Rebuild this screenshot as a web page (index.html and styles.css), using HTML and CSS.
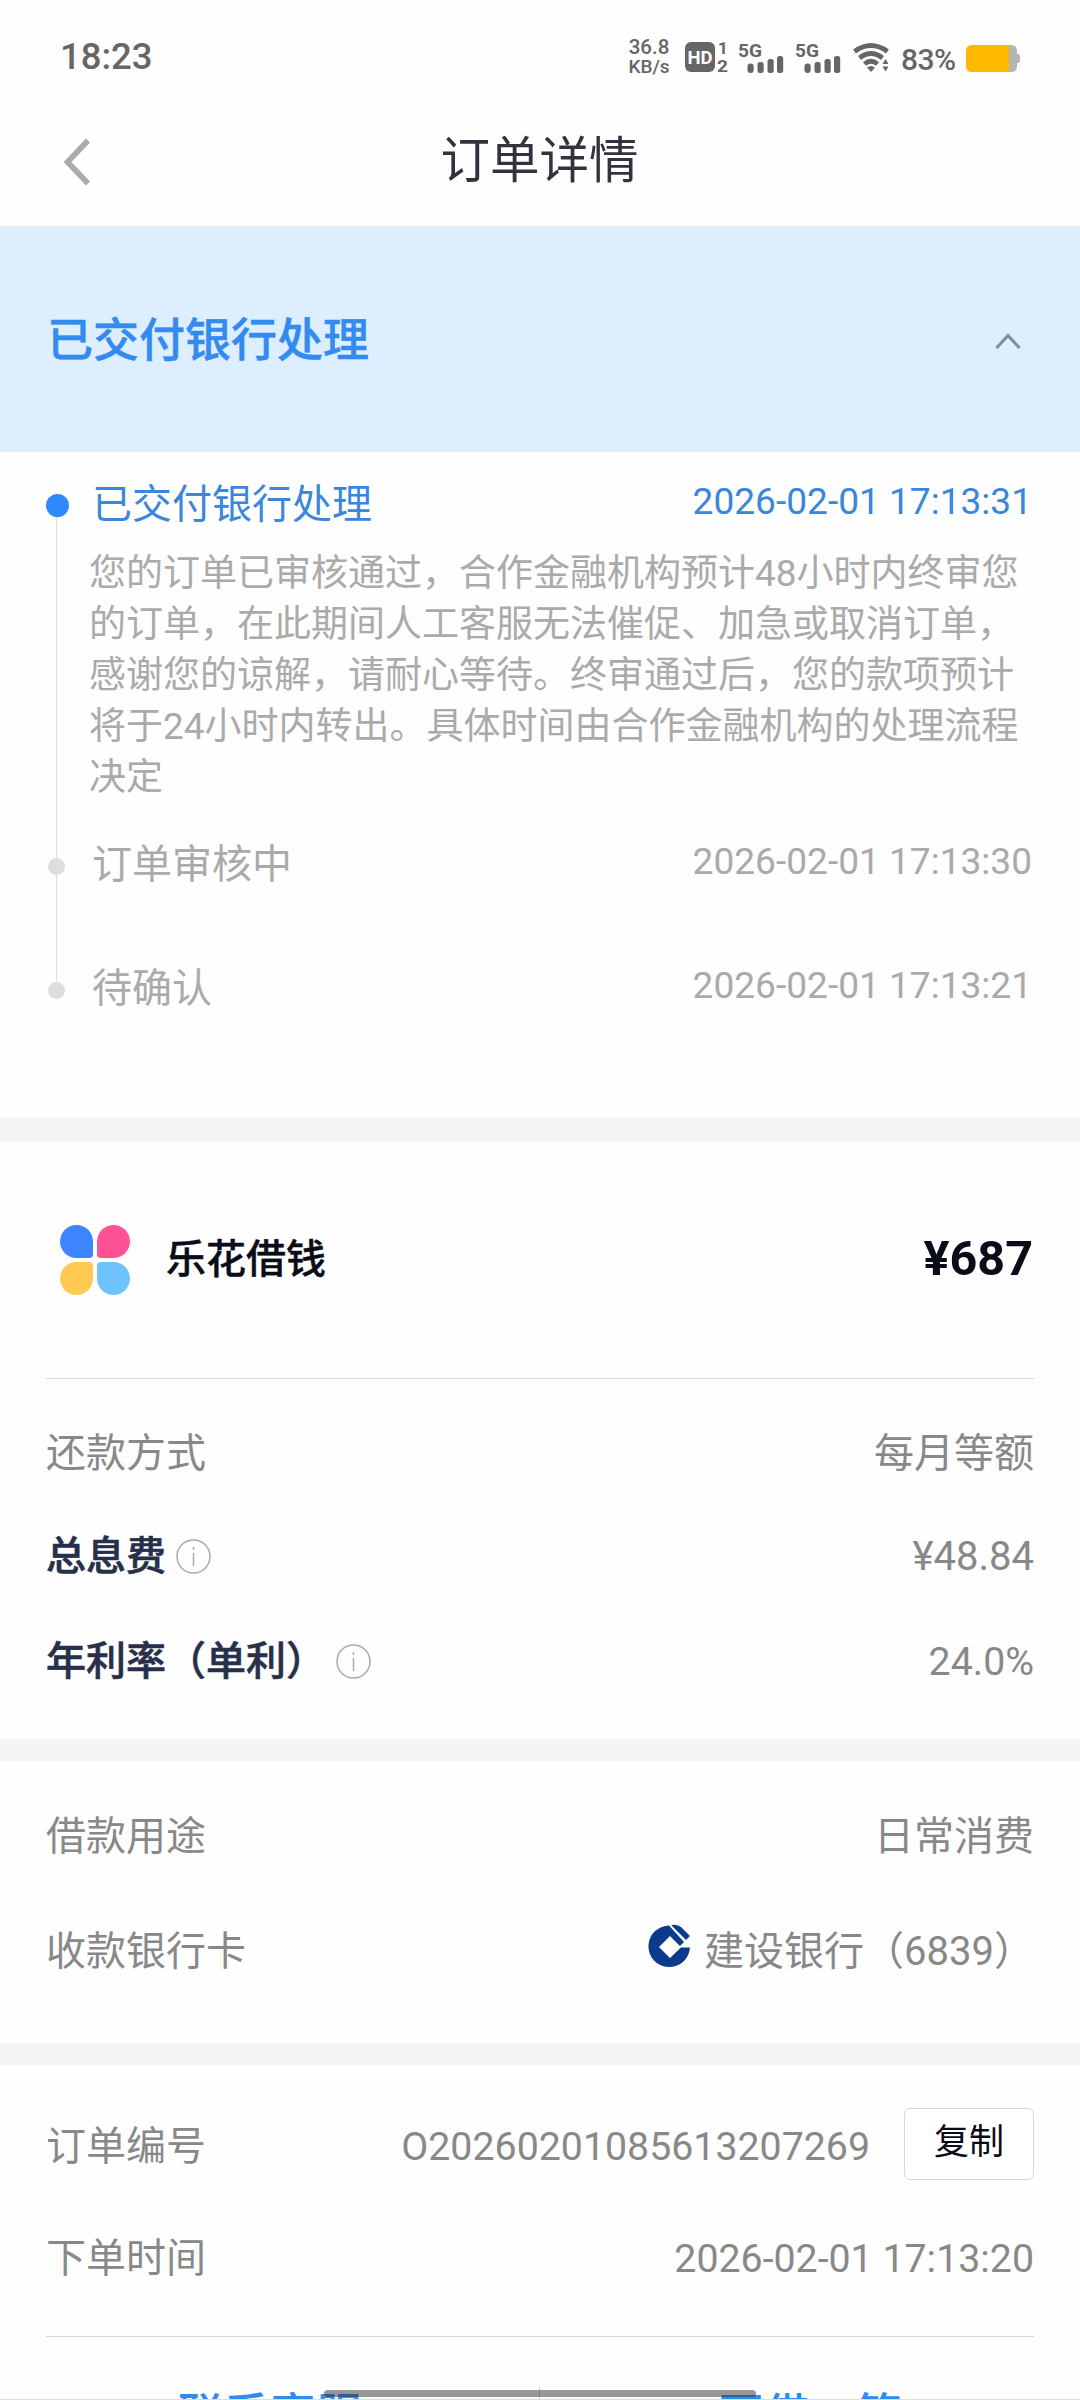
FILE: index.html
```html
<!DOCTYPE html>
<html lang="zh-CN">
<head>
<meta charset="utf-8">
<title>订单详情</title>
<link rel="stylesheet" href="styles.css">
</head>
<body>
<div class="screen">
  <div class="status">
    <span class="clock">18:23</span>
    <div class="status-icons">
      <div class="speed"><span>36.8</span><span>KB/s</span></div>
      <svg class="hd" width="44" height="32" viewBox="0 0 44 32">
        <rect x="0" y="0" width="30" height="30" rx="6" fill="#666"/>
        <text x="15" y="21.500" class="hd-text" text-anchor="middle">HD</text>
        <text x="38" y="11.500" class="sim-text" text-anchor="middle">1</text>
        <text x="32" y="29.500" class="sim-text" textLength="11" lengthAdjust="spacingAndGlyphs">2</text>
      </svg>
      <svg class="sig" width="46" height="32" viewBox="0 0 46 32">
        <text x="0" y="14.500" class="net-text" textLength="24" lengthAdjust="spacingAndGlyphs">5G</text>
        <g fill="#666"><rect x="9.500" y="21.500" width="6.200" height="9.500" rx="3"/><rect x="19.500" y="20" width="6.200" height="11" rx="2.500"/><rect x="29.500" y="17" width="6.200" height="14" rx="2.500"/><rect x="39" y="14" width="6.200" height="17" rx="2.500"/></g>
      </svg>
      <svg class="sig2" width="46" height="32" viewBox="0 0 46 32">
        <text x="0" y="14.500" class="net-text" textLength="24" lengthAdjust="spacingAndGlyphs">5G</text>
        <g fill="#666"><rect x="9.500" y="21.500" width="6.200" height="9.500" rx="3"/><rect x="19.500" y="20" width="6.200" height="11" rx="2.500"/><rect x="29.500" y="17" width="6.200" height="14" rx="2.500"/><rect x="39" y="14" width="6.200" height="17" rx="2.500"/></g>
      </svg>
      <svg class="wifi" width="37" height="30" viewBox="0 0 37 30">
        <g fill="none" stroke="#666" stroke-width="4.800"><path d="M1.500 8.500Q18 -3.500 34.500 8.500"/><path d="M6.500 15Q18 6 29.500 15"/><path d="M11.500 21Q18 15.500 24.500 21"/></g>
        <path d="M14 24.500Q18 21.500 22 24.500L18 29Z" fill="#666"/>
        <path d="M29.500 21L32.500 16L35.500 21ZM29.500 23.500H35.500L32.500 28.500Z" fill="#666"/>
      </svg>
      <span class="percent">83%</span>
      <svg class="battery" width="55" height="28" viewBox="0 0 55 28">
        <path d="M40 0H45Q51 0 51 6V9H52Q54 9 54 11V16Q54 18 52 18H51V21Q51 27 45 27H40Z" fill="#b5b5b5"/>
        <path d="M6 0H43V27H6Q0 27 0 21V6Q0 0 6 0Z" fill="#fdb800"/>
      </svg>
    </div>
  </div>
  <header class="navbar">
    <svg class="back" width="28" height="48" viewBox="0 0 28 48"><path d="M25 2.500L4.500 24L25 45.500" fill="none" stroke="#aaa" stroke-width="5.600"/></svg>
    <h1>订单详情</h1>
  </header>
  <section class="banner">
    <h2>已交付银行处理</h2>
    <svg width="26" height="17" viewBox="0 0 26 17"><path d="M1.500 15L13 2.500L24.500 15" fill="none" stroke="#7e8c9c" stroke-width="3"/></svg>
  </section>
  <section class="timeline">
    <div class="step current">
      <div class="rail"><i class="dot"></i></div>
      <div class="step-body">
        <div class="step-head"><span>已交付银行处理</span><time>2026-02-01 17:13:31</time></div>
        <p>您的订单已审核通过，合作金融机构预计48小时内终审您<br>的订单，在此期间人工客服无法催促、加急或取消订单，<br>感谢您的谅解，请耐心等待。终审通过后，您的款项预计<br>将于24小时内转出。具体时间由合作金融机构的处理流程<br>决定</p>
      </div>
    </div>
    <div class="step">
      <div class="rail"><i class="dot"></i></div>
      <div class="step-body"><div class="step-head"><span>订单审核中</span><time>2026-02-01 17:13:30</time></div></div>
    </div>
    <div class="step last">
      <div class="rail"><i class="dot"></i></div>
      <div class="step-body"><div class="step-head"><span>待确认</span><time>2026-02-01 17:13:21</time></div></div>
    </div>
  </section>
  <section class="loan">
    <div class="product">
      <div class="petals"><i class="blue"></i><i class="pink"></i><i class="yellow"></i><i class="sky"></i></div>
      <span class="product-name">乐花借钱</span>
      <span class="amount">¥687</span>
    </div>
    <div class="row r1"><span>还款方式</span><span>每月等额</span></div>
    <div class="row r2"><span class="strong">总息费</span>
      <svg class="info" width="35" height="35" viewBox="0 0 35 35"><circle cx="17.500" cy="17.500" r="16.500"/><path d="M17.500 14V27M17.500 8V11"/></svg>
      <span class="value money">¥48.84</span></div>
    <div class="row r3"><span class="strong">年利率（单利）</span>
      <svg class="info" width="35" height="35" viewBox="0 0 35 35"><circle cx="17.500" cy="17.500" r="16.500"/><path d="M17.500 14V27M17.500 8V11"/></svg>
      <span class="value">24.0%</span></div>
  </section>
  <section class="usage">
    <div class="row u1"><span>借款用途</span><span>日常消费</span></div>
    <div class="row u2"><span>收款银行卡</span>
      <span class="bank">
        <svg width="42" height="44" viewBox="0 0 42 44">
          <path d="M20 1.500A20.800 20.800 0 1 0 41 23.500H32L21 34L10 23L21 12L31 22L35 18Z" fill="#0b3b8c"/>
          <path d="M23 1Q29 0 34 5L41 12L37 16L22.500 1.500Z" fill="#0b3b8c"/>
        </svg>建设银行（6839）</span></div>
  </section>
  <section class="order">
    <div class="row o1"><span>订单编号</span><span class="value">O20260201085613207269</span><button class="copy">复制</button></div>
    <div class="row o2"><span>下单时间</span><span class="value">2026-02-01 17:13:20</span></div>
    <div class="actions"><a>联系客服</a><a>再借一笔</a></div>
  </section>
  <div class="home-bar"></div>
</div>
</body>
</html>
```
FILE: styles.css
```css
* { box-sizing: border-box; }
body { margin: 0; background: #fefefe; font-family: Roboto, "Noto Sans CJK SC", sans-serif; color: #888; }
h1, h2, p { margin: 0; }
svg { display: block; flex: none; overflow: visible; }
.screen { position: relative; width: 1080px; height: 2400px; overflow: hidden; display: flex; flex-direction: column; border-bottom: 1px solid #ddd; }

.status { height: 96px; flex: none; display: flex; justify-content: space-between; padding: 36px 59px 0 60px; color: #666; }
.clock { font-size: 36.500px; font-weight: 500; line-height: 42px; }
.status-icons { display: flex; align-items: flex-start; }
.speed { width: 44px; display: flex; flex-direction: column; align-items: center; font-size: 19px; font-weight: 500; line-height: 19px; margin-right: 14px; padding-top: 2px; }
.speed span:first-child { font-size: 20.500px; }
.hd { margin: 6px 9px 0 0; }
.sig { margin: 6px 11px 0 0; }
.sig2 { margin: 6px 12px 0 0; }
.wifi { margin: 7px 11px 0 0; }
.hd-text { font: 700 18.500px Roboto, sans-serif; fill: #fff; }
.sim-text { font: 700 17px Roboto, sans-serif; fill: #666; }
.net-text { font: 700 19px Roboto, sans-serif; fill: #666; }
.percent { width: 57px; font-size: 30px; font-weight: 500; line-height: 34px; margin: 7px 8px 0 0; white-space: nowrap; letter-spacing: -0.500px; }
.battery { margin-top: 9px; }

.navbar { height: 131px; flex: none; display: grid; grid-template-columns: 64px 1fr 64px; align-items: center; border-bottom: 1px solid #e4ecf8; }
.back { margin: 1px 0 0 63px; }
.navbar h1 { text-align: center; font-size: 49.500px; font-weight: 400; line-height: 72px; color: #33333f; padding-right: 1px; }

.banner { height: 225px; flex: none; background: #def; display: flex; align-items: center; justify-content: space-between; padding: 0 59px 0 47px; }
.banner h2 { font-size: 46px; font-weight: 500; color: #338bf0; line-height: 60px; -webkit-text-stroke: 0.500px #338bf0; }
.banner svg { margin-top: 3px; }

.timeline { height: 666px; flex: none; padding-top: 28px; font-size: 40px; color: #aaa; }
.step { display: flex; height: 124px; }
.step.current { height: 360px; }
.rail { width: 46px; margin: 26px 0 -26px 34px; display: flex; flex-direction: column; align-items: center; background: linear-gradient(#ddd, #ddd) 22px 0 / 1px 100% no-repeat; }
.last .rail { background: none; }
.dot { width: 17px; height: 17px; margin: -8px 1px 0 0; border-radius: 50%; background: #ddd; }
.current .dot { width: 23px; height: 23px; margin: -12px 0 0 1px; background: #3088ff; }
.step-body { flex: 1; padding-right: 48px; }
.step-head { display: flex; justify-content: space-between; align-items: center; height: 42px; padding-left: 12px; }
.step-head time { font-size: 37.100px; }
.current .step-head { color: #3a86dc; }
.step p { font-size: 37px; line-height: 51.100px; margin: 26px -48px 0 9px; white-space: nowrap; }

.loan { height: 621px; flex: none; border-top: 24px solid #f4f5f5; padding: 0 46px; }
.product { height: 237px; display: flex; align-items: center; border-bottom: 1px solid #d8d8d8; }
.petals { display: grid; grid-template-columns: 33px 33px; grid-template-rows: 33px 33px; gap: 4px; margin: 0 36px 0 14px; }
.petals i { border-radius: 50%; }
.petals .blue { background: #3d84ff; border-bottom-right-radius: 4px; }
.petals .pink { background: #ff5294; border-bottom-left-radius: 4px; }
.petals .yellow { background: #ffc952; border-top-right-radius: 4px; }
.petals .sky { background: #6ec3fd; border-top-left-radius: 4px; }
.product-name { font-size: 40px; font-weight: 500; color: #0a0c18; margin-top: -8px; -webkit-text-stroke: 0.400px #0a0c18; }
.amount { margin: -3px 1px 0 auto; font-size: 48.500px; font-weight: 700; color: #0a0c18; }

.row { display: flex; align-items: center; justify-content: space-between; height: 60px; font-size: 40px; line-height: 60px; white-space: nowrap; }
.row .value { margin-left: auto; font-size: 39.300px; }
.row .money { font-size: 40px; }
.strong { font-weight: 500; color: #26304a; -webkit-text-stroke: 0.600px #26304a; }
.info { margin: -1px 0 0 10px; fill: none; stroke: #aaa; stroke-width: 1.500; }
.r1 { margin-top: 45px; }
.r2 { margin-top: 43px; }
.r3 { margin-top: 45px; }

.usage { height: 304px; flex: none; border-top: 22px solid #f4f5f5; padding: 0 46px; }
.u1 { margin-top: 46px; }
.u2 { margin-top: 55px; }
.bank { display: flex; align-items: center; gap: 13px; }
.bank svg { margin-top: -12px; }

.order { height: 357px; flex: none; border-top: 22px solid #f4f4f4; padding: 0 46px; }
.o1 { margin-top: 52px; }
.copy { width: 130px; height: 72px; margin: -6px 0 0 34px; padding: 0 0 2px; border: 1px solid #d8d8d8; border-radius: 6px; background: #fff; font: 400 35px/64px Roboto, "Noto Sans CJK SC", sans-serif; color: #0a0c18; }
.o2 { margin-top: 52px; }
.actions { height: 120px; margin-top: 47px; border-top: 1px solid #d8d8d8; display: flex; text-align: center; font-size: 46px; font-weight: 500; color: #338bf0; line-height: 60px; }
.actions a { flex: 1; padding-top: 48px; }
.actions a:first-child { margin-left: -46px; background: linear-gradient(#ccc, #ccc) 100% 50px / 1px 100% no-repeat; }
.actions a:last-child { margin-right: -46px; }
.home-bar { position: absolute; left: 324px; top: 2390px; width: 432px; height: 7px; border-radius: 4px; background: rgba(48, 48, 48, 0.5); }
```
